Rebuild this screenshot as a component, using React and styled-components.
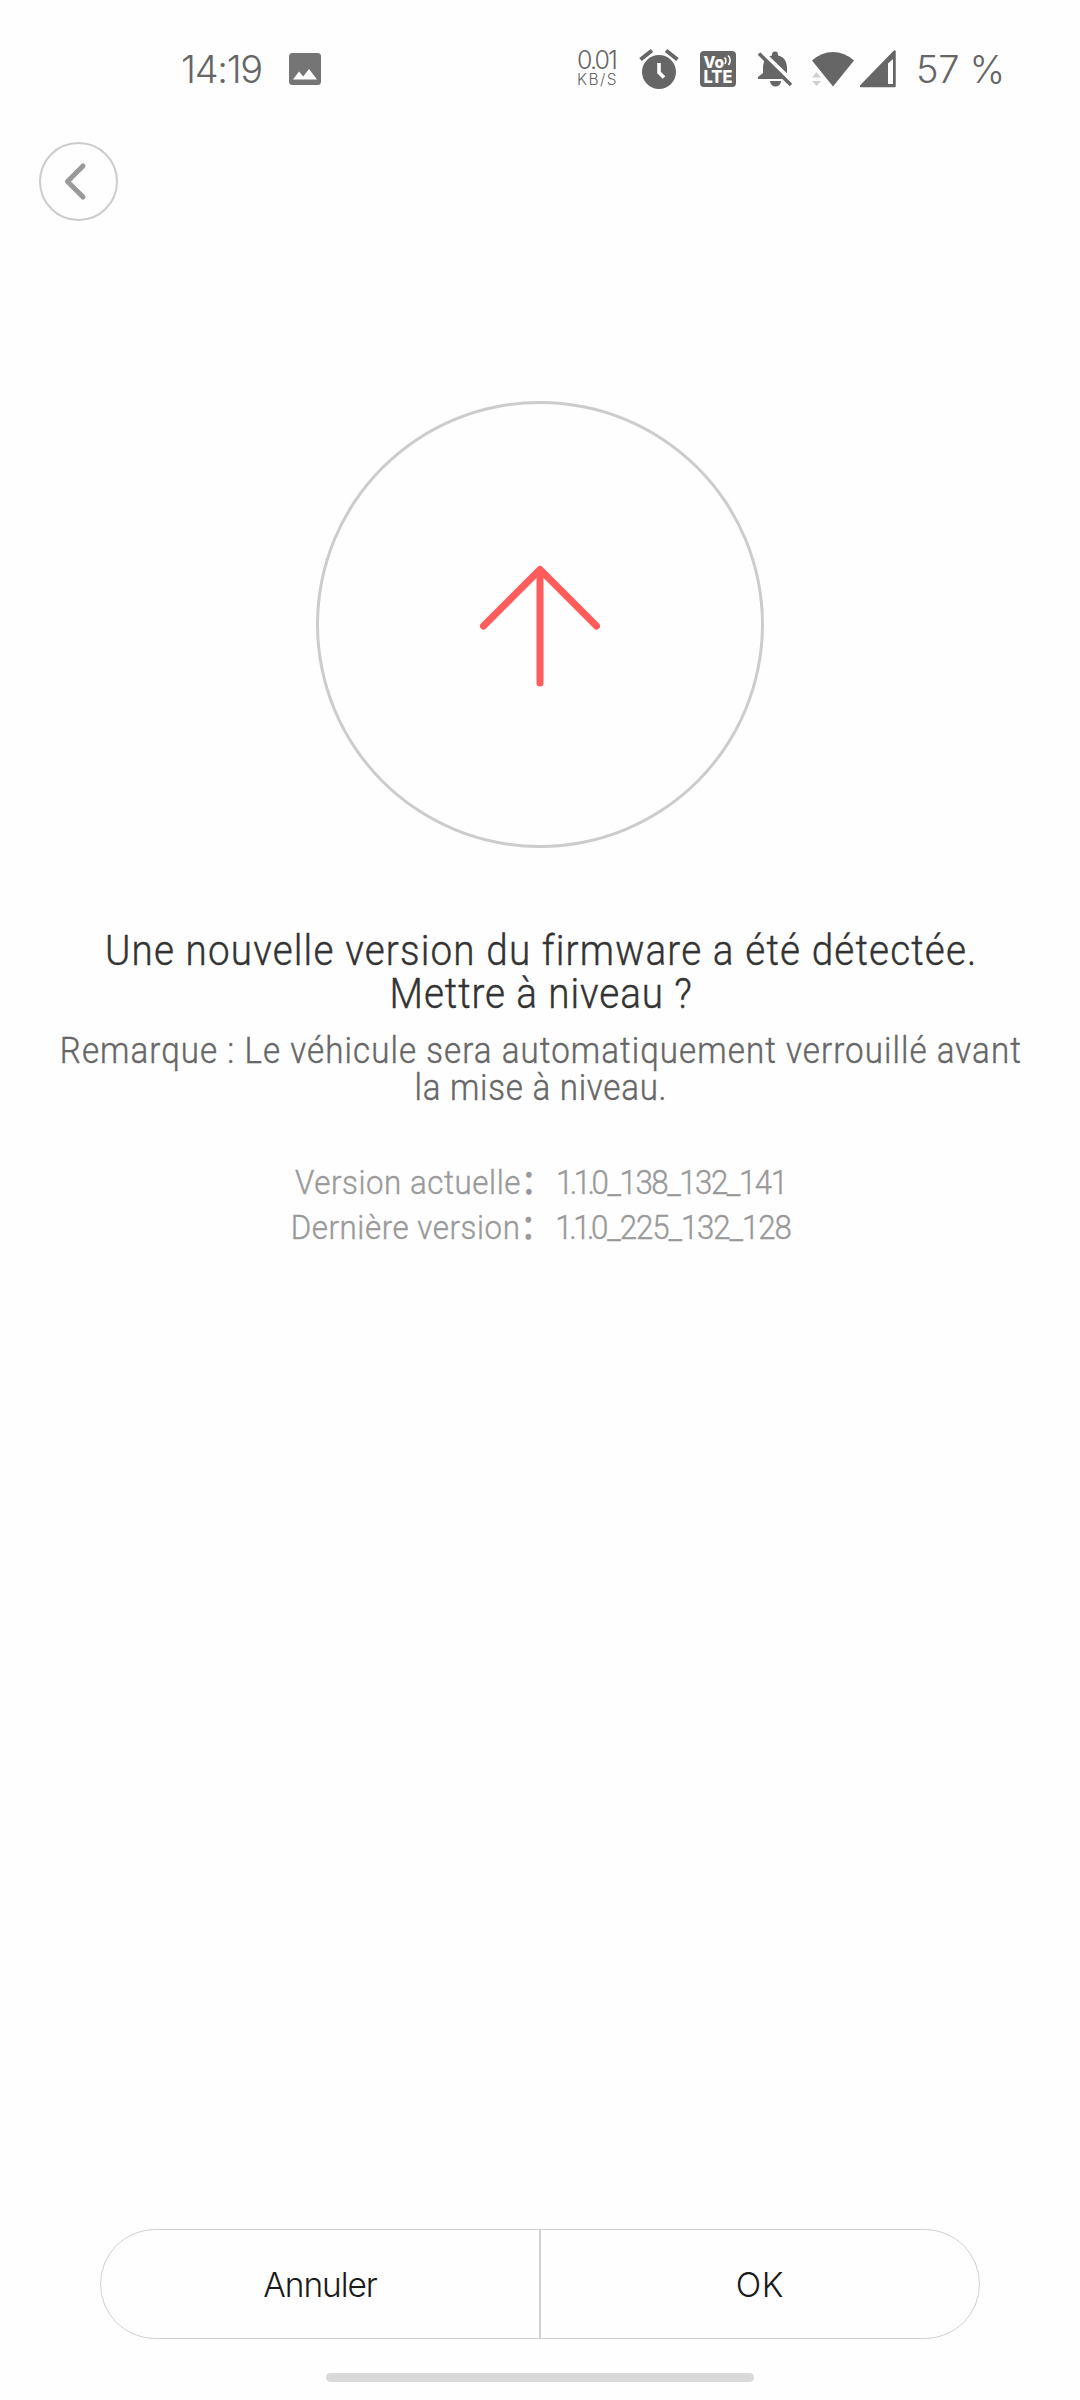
import styled, { createGlobalStyle } from "styled-components";

const GlobalStyle = createGlobalStyle`
  * {
    box-sizing: border-box;
  }
  body {
    margin: 0;
    background-color: #fefefe;
  }
`;

const Screen = styled.div`
  width: 1080px;
  height: 2400px;
  display: flex;
  flex-direction: column;
  overflow: hidden;
  background-color: #fefefe;
  font-family: Roboto, "Noto Sans CJK SC", sans-serif;
  font-weight: 300;
`;

const StatusBar = styled.header`
  height: 142px;
  padding: 49px 76px 0 181px;
  display: flex;
  justify-content: space-between;
  color: #666;
  font-family: Inter, sans-serif;
`;

const StatusGroup = styled.div`
  height: 40px;
  display: flex;
  align-items: center;
`;

const StatusText = styled.span`
  width: ${(props) => props.$width}px;
  font-size: 38px;
  line-height: 40px;
  letter-spacing: ${(props) => props.$spacing}px;
  white-space: nowrap;
`;

const NetSpeed = styled.div`
  width: 62px;
  display: flex;
  flex-direction: column;
`;

const SpeedValue = styled.span`
  font-size: 25px;
  line-height: 22px;
  letter-spacing: -1.9px;
`;

const SpeedUnit = styled.span`
  font-size: 15.5px;
  line-height: 18px;
  letter-spacing: 1.4px;
`;

const Icon = styled.svg`
  display: block;
  flex: none;
  overflow: visible;
  margin-right: ${(props) => props.$gap || 0}px;
`;

const BackButton = styled.button`
  width: 79px;
  height: 79px;
  margin-left: 39px;
  padding: 0;
  flex: none;
  border: 2px solid #ccc;
  border-radius: 50%;
  background-color: transparent;
`;

const Content = styled.main`
  flex: 1;
  display: flex;
  flex-direction: column;
  align-items: center;
  padding-top: 180px;
`;

const UpdateCircle = styled.div`
  width: 448px;
  height: 447px;
  flex: none;
  display: flex;
  align-items: center;
  justify-content: center;
  border: 3px solid #ccc;
  border-radius: 50%;
`;

const Title = styled.h1`
  margin: 81px 0 0;
  color: #333;
  font-size: 42px;
  line-height: 43px;
  font-weight: 300;
  text-align: center;
`;

const Note = styled.p`
  margin: 18px 0 0;
  color: #666;
  font-size: 36px;
  line-height: 37px;
  text-align: center;
`;

const Versions = styled.div`
  margin-top: 53px;
  color: #999;
  font-size: 34px;
  line-height: 45px;
  text-align: center;
`;

const Line = styled.span`
  display: block;
  white-space: nowrap;
  letter-spacing: ${(props) => props.$spacing || 0}px;
  transform: translateX(1px) scaleX(0.92);
  -webkit-text-stroke: 0.4px currentColor;
`;

const Tight = styled.span`
  letter-spacing: ${(props) => props.$spacing}px;
`;

const Colon = styled.span`
  font-weight: 500;
  letter-spacing: 4px;
`;

const Actions = styled.footer`
  width: 880px;
  height: 110px;
  margin: 0 auto 34px;
  flex: none;
  display: flex;
  border: 1px solid #d0d0d0;
  border-radius: 55px;
`;

const ActionButton = styled.button`
  flex: 1;
  padding: 2px 0 0;
  border: none;
  background-color: transparent;
  color: #1a1a1a;
  font-family: Inter, sans-serif;
  font-size: 33.5px;
  font-weight: 300;
  letter-spacing: ${(props) => props.$spacing}px;
`;

const Divider = styled.div`
  width: 2px;
  background-color: #d0d0d0;
`;

const HomeHandle = styled.div`
  width: 428px;
  height: 9px;
  margin: 0 auto 18px;
  flex: none;
  border-radius: 5px;
  background-color: #d9d9d9;
`;

const versions = [
  { label: "Version actuelle", major: "1.1.", build: "0_138_132_141", spacing: -1.6 },
  { label: "Dernière version", major: "1.1.", build: "0_225_132_128", spacing: -1.2 },
];

const PictureIcon = () => (
  <Icon width="32" height="32" viewBox="0 0 32 32">
    <rect width="32" height="32" rx="3.5" fill="#757575" />
    <path d="M4 26.5 10 18.5l4.2 5L20 16l8 10.5z" fill="#fefefe" />
  </Icon>
);

const AlarmIcon = () => (
  <Icon $gap={21} width="40" height="40" viewBox="0 0 40 40">
    <circle cx="20" cy="23" r="17" fill="#666" />
    <path d="M1.5 10.5 13 1.5M27 1.5l11.5 9" stroke="#666" strokeWidth="4" />
    <path d="M20 14v9.5l5 5" fill="none" stroke="#fefefe" strokeWidth="3.6" />
  </Icon>
);

const VolteIcon = () => (
  <Icon $gap={22} width="36" height="36" viewBox="0 0 36 36">
    <rect width="36" height="36" rx="4" fill="#666" />
    <g fill="#fefefe" fontFamily="Inter, sans-serif" fontWeight="800">
      <text x="3.5" y="16.5" fontSize="16.5" textLength="20.5" lengthAdjust="spacingAndGlyphs">
        Vo
      </text>
      <text x="3.5" y="32" fontSize="17" textLength="29" lengthAdjust="spacingAndGlyphs">
        LTE
      </text>
    </g>
    <path
      d="M24.5 6.5q2.5 2.5 0.5 6.5M28 4.5q4 4 0.5 9.5"
      fill="none"
      stroke="#fefefe"
      strokeWidth="1.6"
    />
  </Icon>
);

const MutedBellIcon = () => (
  <Icon $gap={19} width="35" height="36" viewBox="0 0 35 36">
    <path
      d="M5 17C5 10 8.5 5.5 14 4.5V3.5a3 3 0 0 1 6 0v1c5.5 1 9 5.5 9 12.5v7l4 4H0v-2l5-4z"
      fill="#666"
    />
    <path d="M12 30h11a5.5 5.5 0 0 1-11 0z" fill="#666" />
    <path d="M3.5 0.5 35.5 31.5" stroke="#fefefe" strokeWidth="4" />
    <path d="M1 2.5 33 34" stroke="#666" strokeWidth="3.5" />
  </Icon>
);

const WifiIcon = () => (
  <Icon $gap={5} width="42" height="36" viewBox="0 0 42 36">
    <path d="M0 9.5Q9.5 1 21 1t21 8.5L21 35.5z" fill="#666" />
    <path d="M0 26.5 4.5 21 9 26.5zM0 30h9l-4.5 5z" fill="#d0d0d0" />
  </Icon>
);

const SignalIcon = () => (
  <Icon $gap={20} width="37" height="38" viewBox="0 0 37 38">
    <path d="M35.5 1.5V36H2z" fill="#666" stroke="#666" strokeWidth="2.5" strokeLinejoin="round" />
    <path d="M29 13.5 34 9v25h-5z" fill="#fefefe" />
  </Icon>
);

const App = () => {
  return (
    <Screen>
      <GlobalStyle />
      <StatusBar>
        <StatusGroup>
          <StatusText $width={108} $spacing={-1.3}>
            14:19
          </StatusText>
          <PictureIcon />
        </StatusGroup>
        <StatusGroup>
          <NetSpeed>
            <SpeedValue>0.01</SpeedValue>
            <SpeedUnit>KB/S</SpeedUnit>
          </NetSpeed>
          <AlarmIcon />
          <VolteIcon />
          <MutedBellIcon />
          <WifiIcon />
          <SignalIcon />
          <StatusText $width={88} $spacing={-0.3}>
            57 %
          </StatusText>
        </StatusGroup>
      </StatusBar>

      <BackButton aria-label="Retour">
        <Icon width="75" height="75" viewBox="0 0 75 75">
          <path
            d="M42 22 26.5 37.5 42 53"
            fill="none"
            stroke="#999"
            strokeWidth="5"
            strokeLinecap="round"
            strokeLinejoin="round"
          />
        </Icon>
      </BackButton>

      <Content>
        <UpdateCircle>
          <Icon width="122" height="122" viewBox="0 0 122 122">
            <path
              d="M61 5.5v113.5M4.5 62 61 5.5l56.5 56.5"
              fill="none"
              stroke="#ff5c5c"
              strokeWidth="7"
              strokeLinecap="round"
              strokeLinejoin="round"
            />
          </Icon>
        </UpdateCircle>
        <Title>
          <Line $spacing={1.25}>Une nouvelle version du firmware a été détectée.</Line>
          <Line $spacing={1}>Mettre à niveau ?</Line>
        </Title>
        <Note>
          <Line $spacing={1.15}>
            Remarque : Le véhicule sera automatiquement verrouillé avant
          </Line>
          <Line $spacing={0.8}>la mise à niveau.</Line>
        </Note>
        <Versions>
          {versions.map((item) => (
            <Line key={item.label} $spacing={0.6}>
              {item.label}
              <Colon>：</Colon>
              <Tight $spacing={-3.8}>{item.major}</Tight>
              <Tight $spacing={item.spacing}>{item.build}</Tight>
            </Line>
          ))}
        </Versions>
      </Content>

      <Actions>
        <ActionButton $spacing={-1.1}>Annuler</ActionButton>
        <Divider />
        <ActionButton $spacing={0.8}>OK</ActionButton>
      </Actions>
      <HomeHandle />
    </Screen>
  );
};

export default App;
